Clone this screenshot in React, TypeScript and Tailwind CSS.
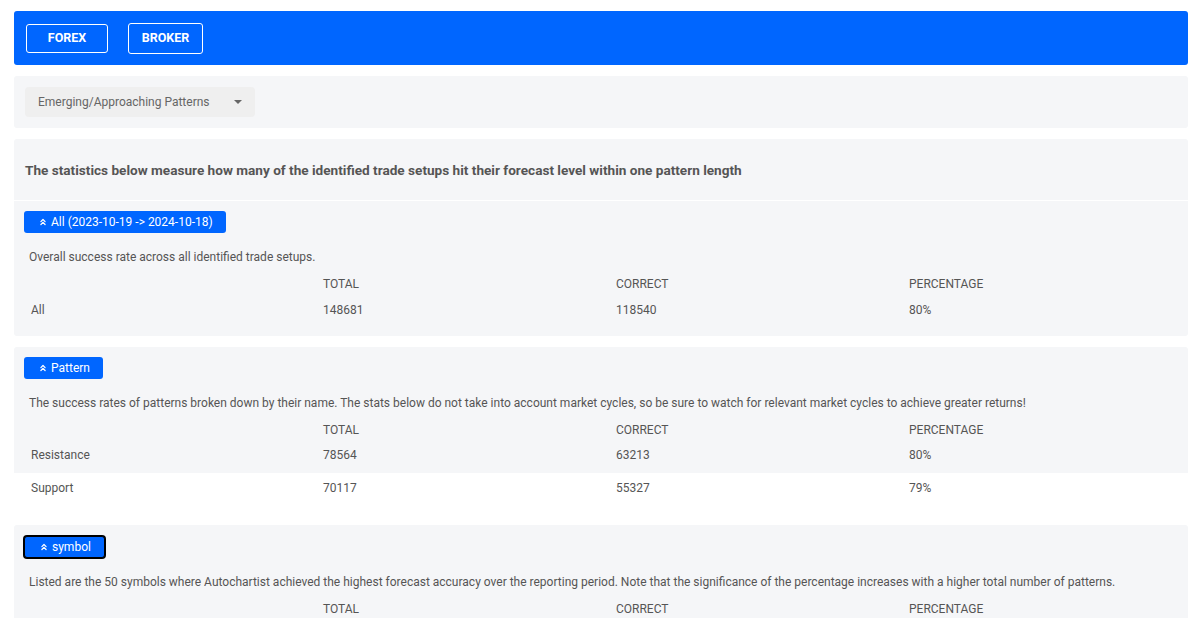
import React from "react";
import { ChevronsUp } from "lucide-react";

const font = { fontFamily: "Roboto, 'Liberation Sans', sans-serif" };

function SectionButton({ label, focused }: { label: string; focused?: boolean }) {
  return (
    <div className="ml-[10px] flex">
      <div
        className={
          "flex h-[22px] items-center rounded-[3px] bg-[#0066ff] pl-[14px] pr-[13px] text-[12px] text-white " +
          (focused ? "border border-black ring-1 ring-black" : "")
        }
      >
        <ChevronsUp size={10} strokeWidth={3} className="mr-[3px]" />
        <span>{label}</span>
      </div>
    </div>
  );
}

function HeaderRow() {
  return (
    <div className="mt-[8px] grid h-[20px] grid-cols-[292px_293px_293px_1fr] items-center pl-[17px] text-[12px] text-[#555]">
      <div></div>
      <div>TOTAL</div>
      <div>CORRECT</div>
      <div>PERCENTAGE</div>
    </div>
  );
}

function Row({ cells, white, up }: { cells: string[]; white?: boolean; up?: boolean }) {
  return (
    <div
      className={
        "grid h-[33px] grid-cols-[292px_293px_293px_1fr] items-center pl-[17px] text-[12px] text-[#555] " +
        (white ? "bg-white" : "bg-[#f5f6f8]")
      }
    >
      {cells.map((c, i) => (
        <div key={i} className={up ? "-mt-[3px]" : "-mt-[1px]"}>
          {c}
        </div>
      ))}
    </div>
  );
}

export default function App() {
  return (
    <div className="min-h-[628px] bg-white pt-[11px]" style={font}>
      <div className="ml-[14px] mr-[12px]">
        {/* top bar */}
        <div className="flex h-[54px] items-center gap-[20px] rounded-[3px] bg-[#0066ff] pl-[12px]">
          <div className="flex h-[29px] w-[82px] items-center justify-center rounded-[3px] border border-white text-[12.5px] font-bold text-white">
            FOREX
          </div>
          <div className="flex h-[31px] w-[75px] items-center justify-center rounded-[3px] border border-white text-[12.5px] font-bold text-white">
            BROKER
          </div>
        </div>

        {/* select panel */}
        <div className="mt-[11px] flex h-[52px] items-center rounded-[3px] bg-[#f5f6f8] pl-[11px]">
          <div className="flex h-[30px] w-[230px] items-center justify-between rounded-[4px] bg-[#efefef] pl-[13px] pr-[12px] text-[12px] text-[#666]">
            <span>Emerging/Approaching Patterns</span>
            <svg width="10" height="6" viewBox="0 0 10 6">
              <path d="M1 1 L9 1 L5 5 Z" fill="#666" />
            </svg>
          </div>
        </div>

        {/* heading panel */}
        <div className="mt-[11px] flex h-[61px] items-center rounded-t-[3px] bg-[#f5f6f8] pl-[11px] pt-[2px]">
          <div className="text-[13.6px] font-bold text-[#555]">
            The statistics below measure how many of the identified trade setups hit their forecast level within one pattern length
          </div>
        </div>

        {/* All section */}
        <div className="mt-[1px] rounded-b-[3px] bg-[#f5f6f8] pt-[10px] pb-[9px]">
          <SectionButton label="All (2023-10-19 -> 2024-10-18)" />
          <div className="mt-[15px] h-[18px] pl-[15px] text-[12px] leading-[18px] text-[#555]">
            Overall success rate across all identified trade setups.
          </div>
          <HeaderRow />
          <Row cells={["All", "148681", "118540", "80%"]} />
        </div>

        {/* Pattern section */}
        <div className="mt-[11px] rounded-t-[3px] bg-[#f5f6f8] pt-[10px]">
          <SectionButton label="Pattern" />
          <div className="mt-[15px] h-[18px] pl-[15px] text-[12px] leading-[18px] text-[#555]">
            The success rates of patterns broken down by their name. The stats below do not take into account market cycles, so be sure to watch for relevant market cycles to achieve greater returns!
          </div>
          <HeaderRow />
          <Row cells={["Resistance", "78564", "63213", "80%"]} up />
          <Row cells={["Support", "70117", "55327", "79%"]} white up />
          <div className="h-[9px] bg-white"></div>
        </div>

        {/* symbol section */}
        <div className="mt-[10px] h-[93px] overflow-hidden rounded-t-[3px] bg-[#f5f6f8] pt-[11px]">
          <SectionButton label="symbol" focused />
          <div className="mt-[15px] h-[18px] pl-[15px] text-[12px] leading-[18px] text-[#555]">
            Listed are the 50 symbols where Autochartist achieved the highest forecast accuracy over the reporting period. Note that the significance of the percentage increases with a higher total number of patterns.
          </div>
          <HeaderRow />
        </div>
      </div>
    </div>
  );
}
